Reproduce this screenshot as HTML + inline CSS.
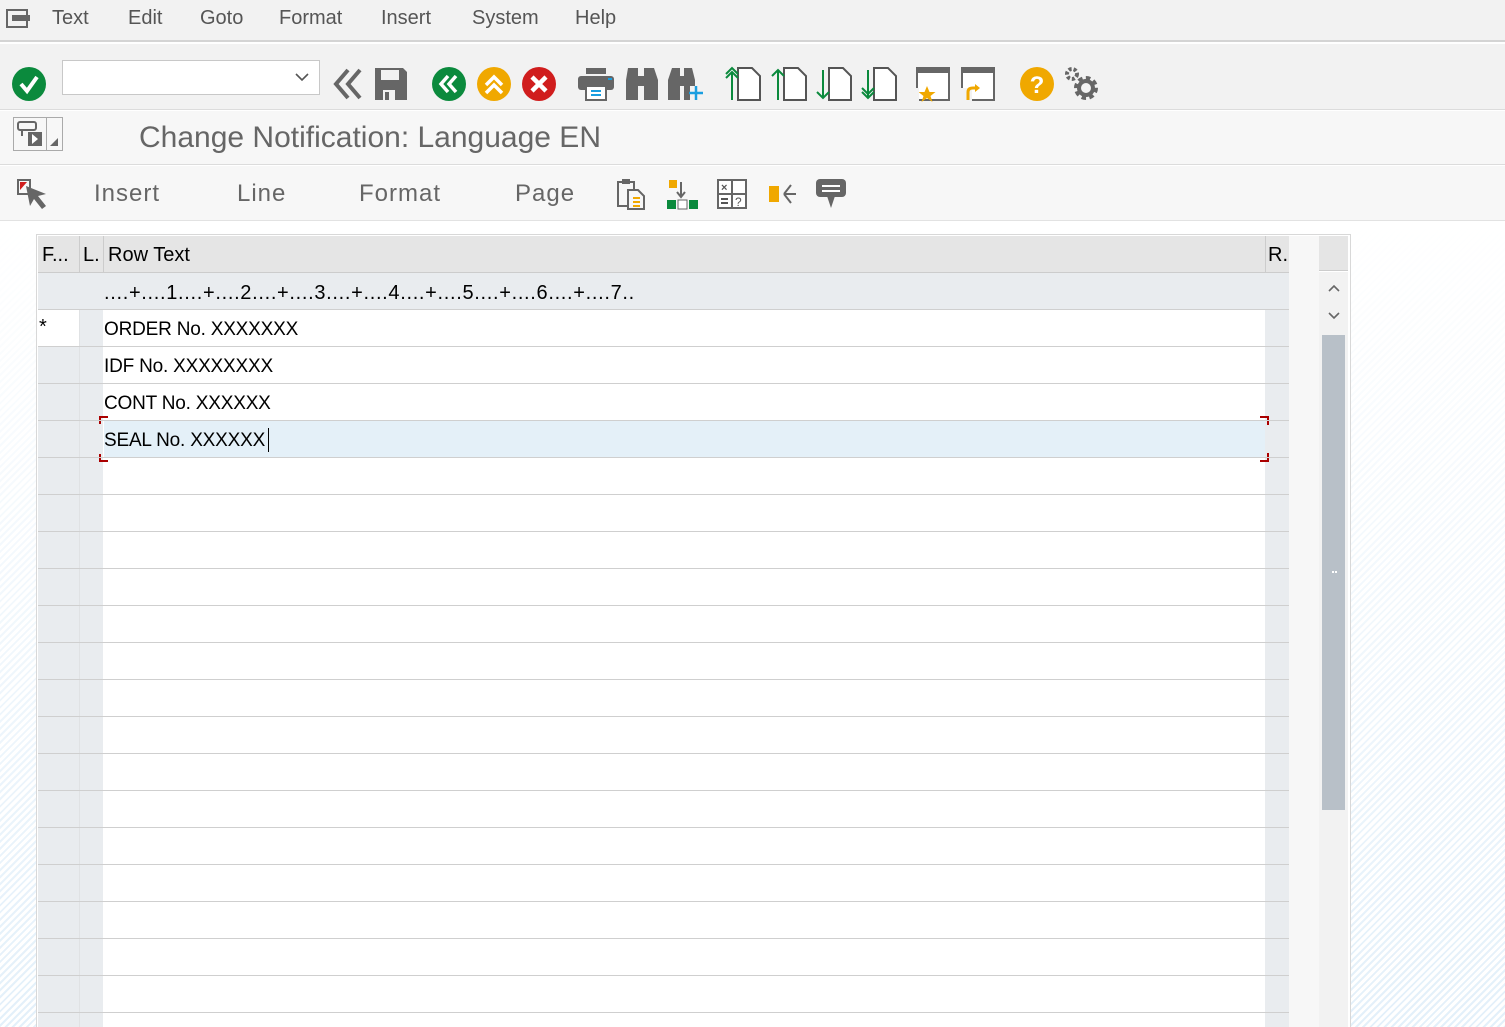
<!DOCTYPE html>
<html><head><meta charset="utf-8"><style>
*{margin:0;padding:0;box-sizing:border-box}
body{width:1505px;height:1027px;overflow:hidden;font-family:"Liberation Sans",sans-serif;background:#fff;position:relative}
.a{position:absolute}
.menu{top:0;left:0;width:1505px;height:42px;background:#f2f2f2;border-bottom:2px solid #d4d4d4}
.menu span{position:absolute;top:7px;font-size:20px;color:#555}
.tb{top:44px;left:0;width:1505px;height:66px;background:#f2f2f2;border-bottom:1px solid #dcdcdc}
.title{top:111px;left:0;width:1505px;height:54px;background:#f7f7f7;border-bottom:1px solid #dcdcdc}
.app{top:166px;left:0;width:1505px;height:55px;background:#f7f7f7;border-bottom:1px solid #e2e2e2}
.app span{position:absolute;top:14px;font-size:24px;color:#666;letter-spacing:1px}
.bg{top:221px;left:0;width:1505px;height:806px;background:repeating-linear-gradient(135deg,#fff 0 3px,#e3f0fa 3px 5px)}
.fade{top:221px;left:0;width:1505px;height:806px;background:linear-gradient(#fff 0%,rgba(255,255,255,.6) 40%,rgba(255,255,255,0) 100%)}
.row{position:absolute;left:38px;width:1251px;height:1px;background:#cfcfcf}
.t{position:absolute;left:104px;font-size:19px;color:#000;letter-spacing:-0.2px}
</style></head><body>
<div class="a bg"></div><div class="a fade"></div>
<div class="a menu">
<svg class="a" style="left:6px;top:9px" width="26" height="20"><rect x="1" y="1" width="20" height="17" fill="none" stroke="#666" stroke-width="2"/><rect x="6" y="6" width="18" height="6" fill="#666"/></svg>
<span style="left:52px">Text</span><span style="left:128px">Edit</span><span style="left:200px">Goto</span><span style="left:279px">Format</span><span style="left:381px">Insert</span><span style="left:472px">System</span><span style="left:575px">Help</span>
</div>
<div class="a tb">
<svg class="a" style="left:11px;top:22px" width="36" height="36"><circle cx="18" cy="18" r="17" fill="#0b8a3d"/><path d="M10 18l6 7 10-14" stroke="#fff" stroke-width="4" fill="none"/></svg>
<div class="a" style="left:62px;top:16px;width:258px;height:35px;background:#fff;border:1px solid #c8c8c8"></div>
<svg class="a" style="left:294px;top:27px" width="16" height="12"><path d="M2 3l6 6 6-6" stroke="#555" stroke-width="1.6" fill="none"/></svg>
<svg class="a" style="left:330px;top:22px" width="34" height="36"><path d="M18 4L6 18l12 14M30 4L18 18l12 14" stroke="#666" stroke-width="4" fill="none"/></svg>
<svg class="a" style="left:373px;top:22px" width="36" height="36"><path d="M2 2h28l4 4v28H2z" fill="#666"/><rect x="8" y="4" width="18" height="10" fill="#f2f2f2"/><rect x="10" y="24" width="12" height="10" fill="#f2f2f2"/><rect x="12" y="26" width="4" height="8" fill="#666"/></svg>
<svg class="a" style="left:431px;top:22px" width="36" height="36"><circle cx="18" cy="18" r="17" fill="#0b8a3d"/><path d="M17 10l-7 8 7 8M25 10l-7 8 7 8" stroke="#fff" stroke-width="3.5" fill="none"/></svg>
<svg class="a" style="left:476px;top:22px" width="36" height="36"><circle cx="18" cy="18" r="17" fill="#f0a800"/><path d="M10 19l8-8 8 8M10 27l8-8 8 8" stroke="#fff" stroke-width="3.5" fill="none"/></svg>
<svg class="a" style="left:521px;top:22px" width="36" height="36"><circle cx="18" cy="18" r="17" fill="#d01d1d"/><path d="M11 11l14 14M25 11L11 25" stroke="#fff" stroke-width="4.5"/></svg>
<svg class="a" style="left:578px;top:22px" width="36" height="36"><rect x="8" y="2" width="20" height="6" fill="#666"/><rect x="0" y="10" width="36" height="14" rx="3" fill="#666"/><rect x="8" y="20" width="20" height="14" fill="#fff" stroke="#666" stroke-width="2"/><path d="M13 25h10M13 29h10" stroke="#1a9ee0" stroke-width="2"/><rect x="30" y="12" width="4" height="2" fill="#1a9ee0"/></svg>
<svg class="a" style="left:624px;top:22px" width="34" height="36"><path d="M4 2h10v32H2V14zM20 2h10l4 12v20H20z" fill="#666"/><rect x="12" y="10" width="10" height="10" fill="#666"/></svg>
<svg class="a" style="left:668px;top:22px" width="36" height="36"><path d="M4 2h8v32H0V14zM16 2h8l3 12v6H16z" fill="#666"/><rect x="10" y="10" width="8" height="10" fill="#666"/><rect x="16" y="20" width="6" height="14" fill="#666"/><path d="M28 20v14M21 27h14" stroke="#1a9ee0" stroke-width="2.5"/></svg>
<svg class="a" style="left:724px;top:22px" width="38" height="36"><path d="M14 2h14l8 8v24H14z" fill="#fff" stroke="#555" stroke-width="2"/><path d="M8 34V6M2 12l6-6 6 6M2 8l6-6 6 6" stroke="#0b8a3d" stroke-width="2" fill="none"/></svg>
<svg class="a" style="left:770px;top:22px" width="38" height="36"><path d="M14 2h14l8 8v24H14z" fill="#fff" stroke="#555" stroke-width="2"/><path d="M8 34V4M2 10l6-6 6 6" stroke="#0b8a3d" stroke-width="2" fill="none"/></svg>
<svg class="a" style="left:815px;top:22px" width="38" height="36"><path d="M14 2h14l8 8v24H14z" fill="#fff" stroke="#555" stroke-width="2"/><path d="M8 4v28M2 26l6 6 6-6" stroke="#0b8a3d" stroke-width="2" fill="none"/></svg>
<svg class="a" style="left:860px;top:22px" width="38" height="36"><path d="M14 2h14l8 8v24H14z" fill="#fff" stroke="#555" stroke-width="2"/><path d="M8 4v28M2 22l6 6 6-6M2 26l6 6 6-6" stroke="#0b8a3d" stroke-width="2" fill="none"/></svg>
<svg class="a" style="left:915px;top:22px" width="36" height="36"><rect x="2" y="2" width="32" height="32" fill="#fff" stroke="#666" stroke-width="2"/><rect x="2" y="2" width="32" height="5" fill="#666"/><path d="M12 20l2.5 6h6l-5 4 2 6-5.5-4-5.5 4 2-6-5-4h6z" fill="#f0a800"/><rect x="0" y="22" width="4" height="14" fill="#f2f2f2"/></svg>
<svg class="a" style="left:960px;top:22px" width="38" height="36"><rect x="2" y="2" width="32" height="32" fill="#fff" stroke="#666" stroke-width="2"/><rect x="2" y="2" width="32" height="5" fill="#666"/><rect x="0" y="22" width="12" height="14" fill="#f2f2f2"/><path d="M8 34v-8q0-4 5-4h3" stroke="#f0a800" stroke-width="3" fill="none"/><path d="M15 18l5 4-5 4z" fill="#f0a800"/></svg>
<svg class="a" style="left:1019px;top:22px" width="36" height="36"><circle cx="18" cy="18" r="17" fill="#f0a800"/><text x="18" y="27" text-anchor="middle" font-size="24" font-weight="bold" fill="#fff" font-family="Liberation Sans">?</text></svg>
<svg class="a" style="left:1064px;top:22px" width="36" height="36"><circle cx="22" cy="22" r="9" fill="none" stroke="#666" stroke-width="6" stroke-dasharray="4 3"/><circle cx="22" cy="22" r="7" fill="none" stroke="#666" stroke-width="4"/><circle cx="8" cy="8" r="5" fill="none" stroke="#666" stroke-width="4" stroke-dasharray="3 2"/></svg>
</div>
<div class="a title">
<div class="a" style="left:13px;top:6px;width:50px;height:34px;border:1px solid #aaa;background:#f7f7f7"></div>
<div class="a" style="left:46px;top:6px;width:1px;height:34px;background:#aaa"></div>
<svg class="a" style="left:16px;top:9px" width="44" height="28"><rect x="2" y="2" width="18" height="8" rx="2" fill="none" stroke="#666" stroke-width="2"/><path d="M6 10v6" stroke="#666" stroke-width="2"/><rect x="12" y="12" width="14" height="14" fill="#666"/><path d="M16 14v10l6-5z" fill="#fff"/><path d="M42 18v8h-8z" fill="#666"/></svg>
<div class="a" style="left:139px;top:10px;font-size:30px;color:#666">Change Notification: Language EN</div>
</div>
<div class="a app">
<svg class="a" style="left:16px;top:12px" width="34" height="34"><rect x="2" y="2" width="12" height="14" fill="none" stroke="#666" stroke-width="2"/><path d="M4 4h7l-7 8z" fill="#d01d1d"/><path d="M10 8l20 8-8 2 8 10-4 3-8-10-4 7z" fill="#666"/></svg>
<span style="left:94px">Insert</span><span style="left:237px">Line</span><span style="left:359px">Format</span><span style="left:515px">Page</span>
<svg class="a" style="left:616px;top:12px" width="34" height="32"><path d="M2 4h16v24H2z" fill="none" stroke="#666" stroke-width="2"/><rect x="6" y="1" width="8" height="5" fill="#666"/><path d="M12 12h10l6 6v13H12z" fill="#f7f7f7" stroke="#666" stroke-width="2"/><path d="M17 20h7M17 24h7M17 28h7" stroke="#f0a800" stroke-width="2"/></svg>
<svg class="a" style="left:667px;top:12px" width="34" height="32"><rect x="2" y="2" width="8" height="8" fill="#f0a800"/><path d="M14 4v14M10 14l4 5 4-5" stroke="#666" stroke-width="2" fill="none"/><rect x="0" y="22" width="9" height="9" fill="#0b8a3d"/><rect x="11" y="22" width="9" height="9" fill="#fff" stroke="#666"/><rect x="22" y="22" width="9" height="9" fill="#0b8a3d"/></svg>
<svg class="a" style="left:716px;top:12px" width="32" height="32"><rect x="2" y="2" width="28" height="28" fill="#fff" stroke="#666" stroke-width="2"/><path d="M16 2v28M2 16h28" stroke="#666" stroke-width="2"/><text x="5" y="13" font-size="11" fill="#555" font-weight="bold">×</text><path d="M5 21h7M5 25h7" stroke="#555" stroke-width="2"/><text x="19" y="28" font-size="12" fill="#555">?</text></svg>
<svg class="a" style="left:768px;top:12px" width="32" height="32"><rect x="1" y="8" width="10" height="16" fill="#f0a800"/><path d="M16 16l7-9M16 16h12M16 16l7 9" stroke="#666" stroke-width="2" fill="none"/></svg>
<svg class="a" style="left:815px;top:12px" width="34" height="32"><rect x="1" y="1" width="30" height="18" rx="4" fill="#666"/><path d="M7 8h18M7 13h18" stroke="#fff" stroke-width="2"/><path d="M12 18h8l-4 12z" fill="#666"/></svg>
</div>
<div class="a" style="left:36px;top:234px;width:1315px;height:793px;border:1px solid #d8d8d8;border-bottom:none;background:#fff"></div>
<div class="a" style="left:38px;top:236px;width:1251px;height:37px;background:#e5e5e5;border-bottom:1px solid #ccc"></div>
<div class="a" style="left:38px;top:273px;width:1251px;height:37px;background:#e9ecef"></div>
<div class="a" style="left:38px;top:346px;width:41px;height:681px;background:#e9ecef"></div>
<div class="a" style="left:79px;top:310px;width:24px;height:717px;background:#e9ecef;border-left:1px solid #e0e2e4"></div>
<div class="a" style="left:1265px;top:310px;width:24px;height:717px;background:#e9ecef"></div>
<div class="a" style="left:79px;top:236px;width:1px;height:37px;background:#ccc"></div>
<div class="a" style="left:103px;top:236px;width:1px;height:37px;background:#ccc"></div>
<div class="a" style="left:1265px;top:236px;width:1px;height:37px;background:#ccc"></div>
<div class="a" style="left:1289px;top:236px;width:30px;height:791px;background:#f7f7f7"></div>
<div class="a" style="left:1319px;top:236px;width:29px;height:35px;background:#e5e5e5;border-bottom:1px solid #ccc"></div>
<div class="a" style="left:1319px;top:272px;width:29px;height:755px;background:#f2f2f2"></div>
<svg class="a" style="left:1326px;top:280px" width="16" height="50"><path d="M3 11l5-5 5 5M3 33l5 5 5-5" stroke="#666" stroke-width="1.6" fill="none"/></svg>
<div class="a" style="left:1322px;top:335px;width:23px;height:475px;background:#b8c0c8"></div>
<div class="a" style="left:1332px;top:571px;width:3px;height:8px;border-top:2px dotted #fff"></div>
<div class="a" style="left:104px;top:421px;width:1161px;height:36px;background:#e4f0f8"></div>
<div class="a" style="left:42px;top:244px;font-size:20px">F...</div>
<div class="a" style="left:83px;top:244px;font-size:20px">L.</div>
<div class="a" style="left:108px;top:244px;font-size:20px">Row Text</div>
<div class="a" style="left:1268px;top:244px;font-size:20px">R.</div>
<div class="t" style="top:282px;font-size:20px;letter-spacing:0.68px">....+....1....+....2....+....3....+....4....+....5....+....6....+....7..</div>
<div class="a" style="left:39px;top:316px;font-size:20px">*</div>
<div class="t" style="top:319px">ORDER No. XXXXXXX</div>
<div class="t" style="top:356px">IDF No. XXXXXXXX</div>
<div class="t" style="top:393px">CONT No. XXXXXX</div>
<div class="t" style="top:430px">SEAL No. XXXXXX</div>
<div class="a" style="left:268px;top:428px;width:1px;height:24px;background:#000"></div>
<svg class="a" style="left:99px;top:416px" width="172" height="46"><path d="M1 8V1h8M1 38v7h8" stroke="#a00" stroke-width="2" fill="none"/></svg>
<svg class="a" style="left:1258px;top:416px" width="12" height="46"><path d="M2 1h8v8M2 45h8v-8" stroke="#a00" stroke-width="2" fill="none"/></svg>
<div class="row" style="top:309px"></div>
<div class="row" style="top:346px"></div><div class="row" style="top:383px"></div><div class="row" style="top:420px"></div><div class="row" style="top:457px"></div><div class="row" style="top:494px"></div><div class="row" style="top:531px"></div><div class="row" style="top:568px"></div><div class="row" style="top:605px"></div><div class="row" style="top:642px"></div><div class="row" style="top:679px"></div><div class="row" style="top:716px"></div><div class="row" style="top:753px"></div><div class="row" style="top:790px"></div><div class="row" style="top:827px"></div><div class="row" style="top:864px"></div><div class="row" style="top:901px"></div><div class="row" style="top:938px"></div><div class="row" style="top:975px"></div><div class="row" style="top:1012px"></div>
</body></html>
